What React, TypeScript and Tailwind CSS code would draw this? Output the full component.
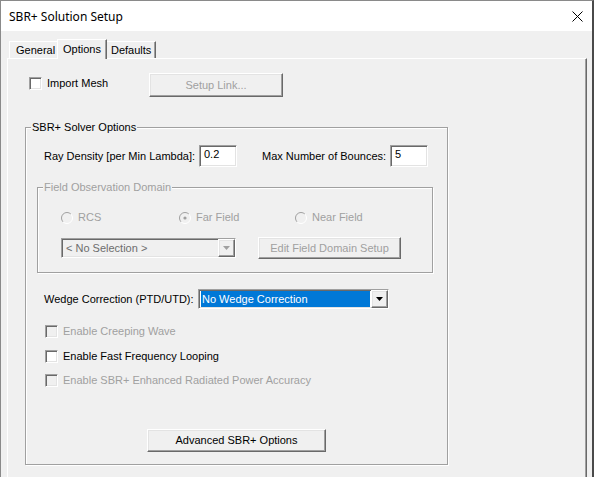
import React from "react";

// classic 3D edges
const sunken =
  "border border-t-[#a0a0a0] border-l-[#a0a0a0] border-r-white border-b-white shadow-[inset_1px_1px_0_#696969,inset_-1px_-1px_0_#e3e3e3]";
const raised =
  "border border-t-white border-l-white border-r-[#696969] border-b-[#696969] shadow-[inset_-1px_-1px_0_#a0a0a0,inset_1px_1px_0_#e3e3e3]";
const etched =
  "border border-[#a0a0a0] shadow-[1px_1px_0_#fff,inset_1px_1px_0_#fff]";

const CheckBox = ({ disabled }: { disabled?: boolean }) => (
  <span
    className={`block w-[13px] h-[13px] shrink-0 ${sunken} ${
      disabled ? "bg-[#f0f0f0]" : "bg-white"
    }`}
  />
);

const Radio = ({ checked }: { checked?: boolean }) => (
  <svg width="12" height="12" viewBox="0 0 12 12" className="shrink-0">
    <circle cx="6" cy="6" r="5.5" fill="#f0f0f0" />
    <path d="M2.1 9.9 A5.5 5.5 0 0 1 9.9 2.1" stroke="#a0a0a0" fill="none" />
    <path d="M9.9 2.1 A5.5 5.5 0 0 1 2.1 9.9" stroke="#ffffff" fill="none" />
    {checked && <circle cx="6" cy="6" r="1.6" fill="#a0a0a0" />}
  </svg>
);

const Arrow = ({ color }: { color: string }) => (
  <svg width="7" height="4" viewBox="0 0 7 4">
    <polygon points="0,0 7,0 3.5,4" fill={color} />
  </svg>
);

const TextBox = ({ value }: { value: string }) => (
  <div className={`${sunken} w-[38px] h-[22px] bg-white pl-[4px] pt-[2px]`}>
    {value}
  </div>
);

const GroupLabel = ({
  text,
  disabled,
}: {
  text: string;
  disabled?: boolean;
}) => (
  <span
    className={`-mt-[7px] ml-[5px] px-[1px] self-start bg-[#f0f0f0] ${
      disabled ? "text-[#a0a0a0]" : ""
    }`}
  >
    {text}
  </span>
);

const Option = ({
  label,
  disabled,
  className,
}: {
  label: string;
  disabled?: boolean;
  className: string;
}) => (
  <div className={`flex items-center h-[13px] ${className}`}>
    <CheckBox disabled={disabled} />
    <span className={`ml-[5px] ${disabled ? "text-[#a0a0a0]" : ""}`}>
      {label}
    </span>
  </div>
);

export default function App() {
  return (
    <div className="w-[594px] h-[477px] overflow-hidden bg-[#f0f0f0] border-t border-l border-[#8a8a8a] border-r-2 border-r-[#4a4a4a] font-['Liberation_Sans',Arial,sans-serif] text-[11px] leading-[13px] text-black flex flex-col">
      {/* title bar */}
      <div className="h-[30px] shrink-0 bg-white flex items-center justify-between pl-[8px] pr-[9px]">
        <span className="font-['Noto_Sans',sans-serif] text-[12px]">
          SBR+ Solution Setup
        </span>
        <svg width="11" height="11" viewBox="0 0 11 11">
          <path d="M0.5 0.5 L10.5 10.5 M10.5 0.5 L0.5 10.5" stroke="#000" />
        </svg>
      </div>

      {/* tabs */}
      <div className="mt-[8px] ml-[8px] flex h-[20px] relative z-10 -mb-px">
        <div className="mt-[2px] h-[17px] w-[48px] border-t border-l border-white pl-[6px] pt-[2px]">
          General
        </div>
        <div className="h-[20px] w-[50px] bg-[#f0f0f0] border-t border-l border-white border-r border-r-[#696969] shadow-[inset_-1px_0_0_#a0a0a0] pl-[5px] pt-[3px]">
          Options
        </div>
        <div className="mt-[2px] h-[17px] w-[49px] border-t border-white border-r border-r-[#696969] shadow-[inset_-1px_0_0_#a0a0a0] pl-[4px] pt-[2px]">
          Defaults
        </div>
      </div>

      {/* tab page */}
      <div className="ml-[6px] w-[580px] flex-1 flex flex-col border-t border-l border-white border-r border-r-[#696969] shadow-[inset_-1px_0_0_#a0a0a0]">
        <div className="mt-[14px] ml-[21px] flex items-start h-[24px]">
          <div className="mt-[4px]">
            <CheckBox />
          </div>
          <span className="ml-[5px] mt-[4px] w-[102px]">Import Mesh</span>
          <button
            className={`${raised} w-[134px] h-[24px] bg-[#f0f0f0] text-[#a0a0a0]`}
          >
            Setup Link...
          </button>
        </div>

        <div
          className={`mt-[30px] ml-[17px] w-[423px] h-[338px] flex flex-col ${etched}`}
        >
          <GroupLabel text="SBR+ Solver Options" />

          <div className="mt-[11px] ml-[18px] flex items-center h-[22px]">
            <span className="w-[155px]">Ray Density [per Min Lambda]:</span>
            <TextBox value="0.2" />
            <span className="ml-[25px] w-[128px]">Max Number of Bounces:</span>
            <TextBox value="5" />
          </div>

          <div
            className={`mt-[20px] ml-[11px] w-[396px] h-[86px] shrink-0 flex flex-col ${etched}`}
          >
            <GroupLabel text="Field Observation Domain" disabled />
            <div className="mt-[17px] ml-[23px] flex items-center h-[13px] text-[#a0a0a0]">
              <div className="flex items-center w-[118px]">
                <Radio />
                <span className="ml-[5px]">RCS</span>
              </div>
              <div className="flex items-center w-[116px]">
                <Radio checked />
                <span className="ml-[5px]">Far Field</span>
              </div>
              <div className="flex items-center">
                <Radio />
                <span className="ml-[5px]">Near Field</span>
              </div>
            </div>
            <div className="mt-[13px] ml-[23px] flex items-center h-[22px]">
              <div
                className={`${sunken} w-[175px] h-[20px] bg-[#f0f0f0] flex items-center`}
              >
                <span className="pl-[4px] text-[#6d6d6d]">
                  &lt; No Selection &gt;
                </span>
                <div
                  className={`${raised} ml-auto w-[17px] h-[18px] flex items-center justify-center`}
                >
                  <Arrow color="#a0a0a0" />
                </div>
              </div>
              <button
                className={`${raised} ml-[22px] w-[143px] h-[22px] bg-[#f0f0f0] text-[#a0a0a0]`}
              >
                Edit Field Domain Setup
              </button>
            </div>
          </div>

          <div className="mt-[16px] ml-[18px] flex items-center h-[20px]">
            <span className="w-[154px]">Wedge Correction (PTD/UTD):</span>
            <div
              className={`${sunken} w-[191px] h-[20px] bg-white flex items-center`}
            >
              <span className="ml-[2px] h-[16px] w-[169px] bg-[#0078d7] text-white pl-[1px] flex items-center">
                No Wedge Correction
              </span>
              <div
                className={`${raised} ml-auto w-[17px] h-[18px] bg-[#f0f0f0] flex items-center justify-center`}
              >
                <Arrow color="#000" />
              </div>
            </div>
          </div>

          <Option
            className="mt-[16px] ml-[19px]"
            label="Enable Creeping Wave"
            disabled
          />
          <Option
            className="mt-[12px] ml-[19px]"
            label="Enable Fast Frequency Looping"
          />
          <Option
            className="mt-[11px] ml-[19px]"
            label="Enable SBR+ Enhanced Radiated Power Accuracy"
            disabled
          />

          <button
            className={`${raised} mt-[42px] ml-[121px] w-[179px] h-[23px] bg-[#f0f0f0]`}
          >
            Advanced SBR+ Options
          </button>
        </div>
      </div>
    </div>
  );
}
